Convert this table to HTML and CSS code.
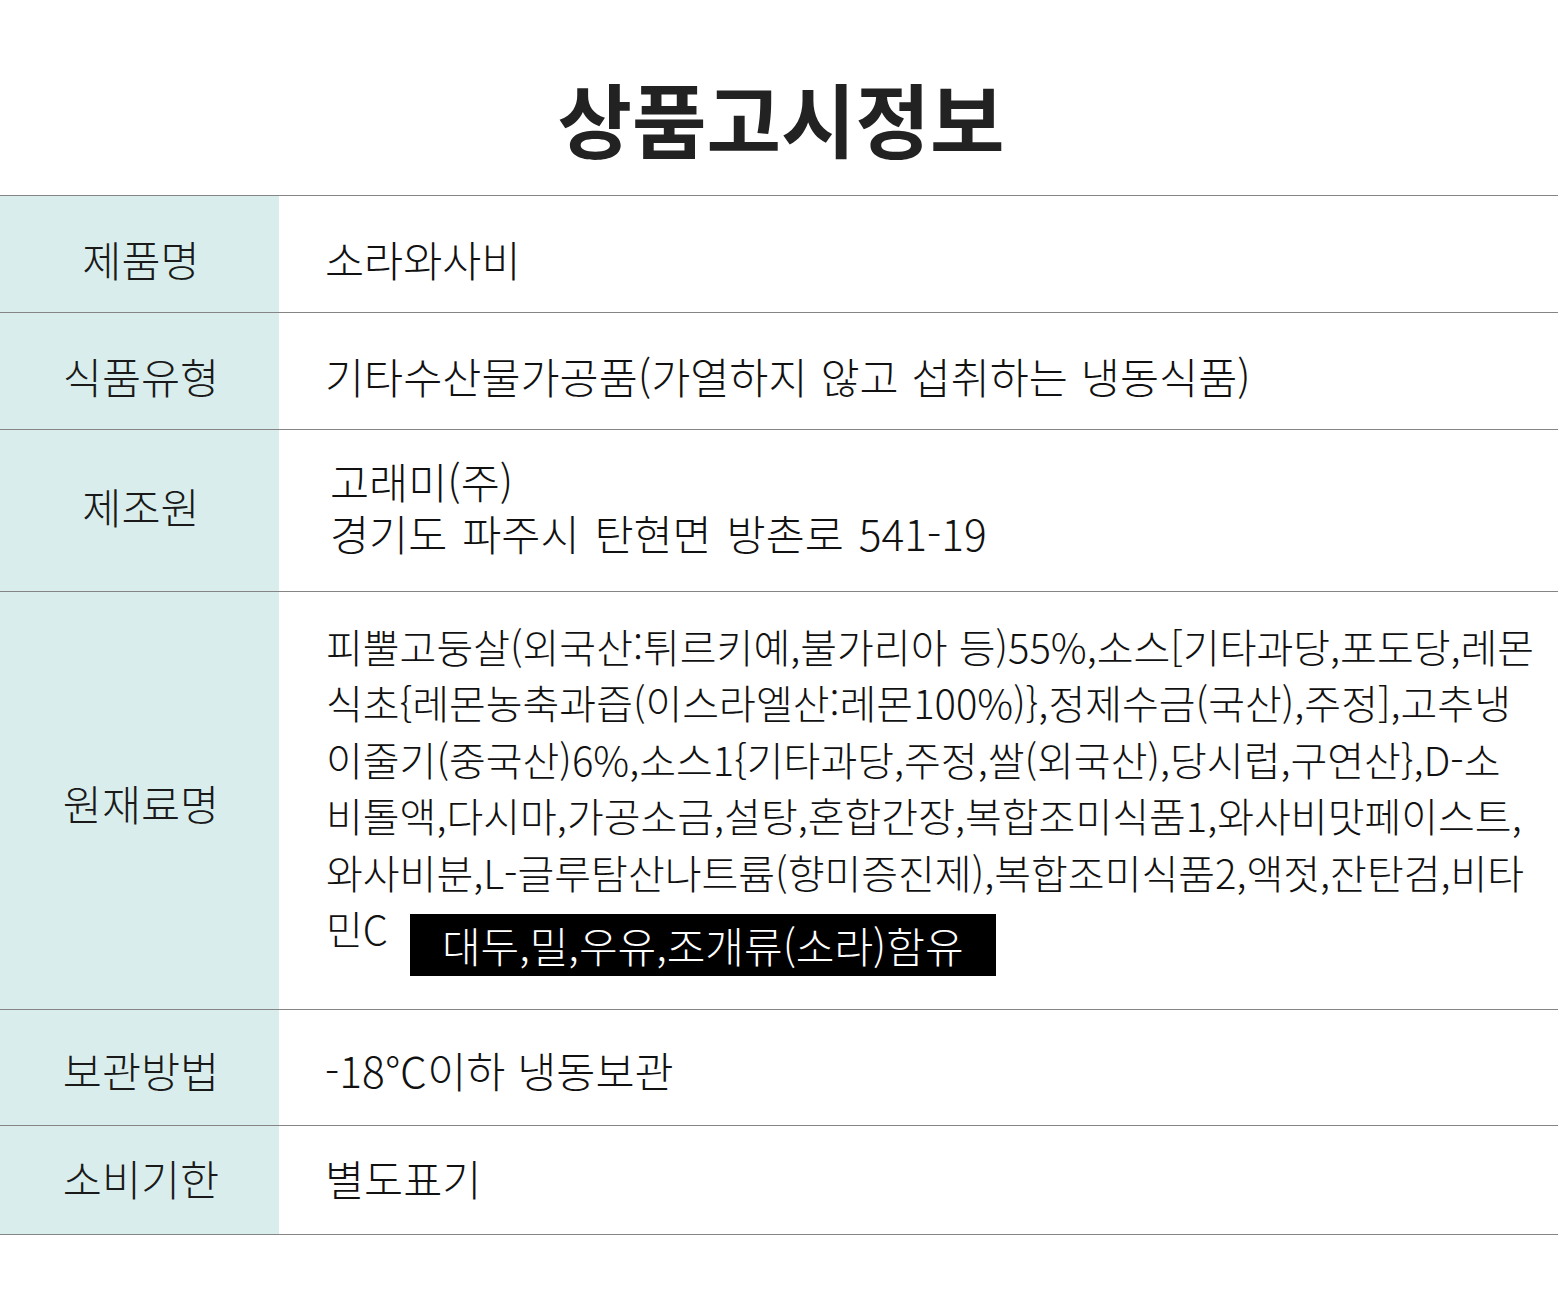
FILE: index.html
```html
<!DOCTYPE html>
<html lang="ko">
<head>
<meta charset="utf-8">
<title>상품고시정보</title>
<link rel="stylesheet" href="styles.css">
</head>
<body>
<div class="page">
  <h1 class="title">상품고시정보</h1>
  <div class="table">
    <div class="row row-a">
      <div class="label">제품명</div>
      <div class="value">소라와사비</div>
    </div>
    <div class="row row-a">
      <div class="label">식품유형</div>
      <div class="value">기타수산물가공품(가열하지 않고 섭취하는 냉동식품)</div>
    </div>
    <div class="row row-maker">
      <div class="label">제조원</div>
      <div class="value"><div class="line">고래미(주)</div><div class="line">경기도 파주시 탄현면 방촌로 541-19</div></div>
    </div>
    <div class="row row-ingr">
      <div class="label">원재료명</div>
      <div class="value">피뿔고둥살(외국산:튀르키예,불가리아 등)55%,소스[기타과당,포도당,레몬<br>식초{레몬농축과즙(이스라엘산:레몬100%)},정제수금(국산),주정],고추냉<br>이줄기(중국산)6%,소스1{기타과당,주정,쌀(외국산),당시럽,구연산},D-소<br>비톨액,다시마,가공소금,설탕,혼합간장,복합조미식품1,와사비맛페이스트,<br>와사비분,L-글루탐산나트륨(향미증진제),복합조미식품2,액젓,잔탄검,비타<br>민C<span class="allergy">대두,밀,우유,조개류(소라)함유</span></div>
    </div>
    <div class="row row-store">
      <div class="label">보관방법</div>
      <div class="value">-18℃이하 냉동보관</div>
    </div>
    <div class="row row-exp">
      <div class="label">소비기한</div>
      <div class="value">별도표기</div>
    </div>
  </div>
</div>
</body>
</html>
```

FILE: styles.css
```css
* { box-sizing: border-box; }
html, body { margin: 0; padding: 0; background: #fff; }
body {
  font-family: "Noto Sans CJK KR", "Noto Sans", sans-serif;
  color: #111;
}
.page { width: 1562px; }
.title {
  margin: 0;
  padding: 76px 0 0;
  height: 195px;
  font-size: 81px;
  line-height: 81px;
  font-weight: 700;
  color: #222;
  text-align: center;
}
.table {
  width: 1558px;
  border-top: 1px solid #858585;
}
.row {
  display: grid;
  grid-template-columns: 279px 1fr;
  border-bottom: 1px solid #858585;
}
.label {
  background: #d9eeec;
  display: flex;
  align-items: center;
  justify-content: center;
  font-size: 42.5px;
  line-height: 56px;
  font-weight: 300;
  color: #1a1a1a;
  padding-left: 3px;
}
.value {
  font-size: 42.5px;
  font-weight: 300;
  line-height: 56px;
  padding: 35px 25px 25px 46px;
  color: #111;
}
.row-a .label { padding-top: 35px; padding-bottom: 25px; }
.row-a .value { word-spacing: 1px; }
.row-maker .label { padding-bottom: 10px; }
.row-maker .value { line-height: 52px; padding: 25px 25px 32px 51px; word-spacing: 3px; }
.row-maker .line { height: 52px; }
.row-ingr .label { padding-top: 4px; }
.row-ingr .value {
  font-size: 40px;
  line-height: 56.5px;
  padding: 25.5px 10px 33px 47px;
  white-space: nowrap;
}
.row-store .label { padding-top: 32px; padding-bottom: 27px; }
.row-store .value { padding: 32px 25px 27px 46px; }
.row-exp .label { padding-top: 24px; padding-bottom: 28px; }
.row-exp .value { padding: 24px 25px 28px 46px; }
.allergy {
  display: inline-block;
  background: #000;
  color: #fff;
  font-size: 42px;
  height: 62px;
  line-height: 62px;
  padding: 0 32px;
  margin-left: 22px;
  vertical-align: -18px;
}
```
